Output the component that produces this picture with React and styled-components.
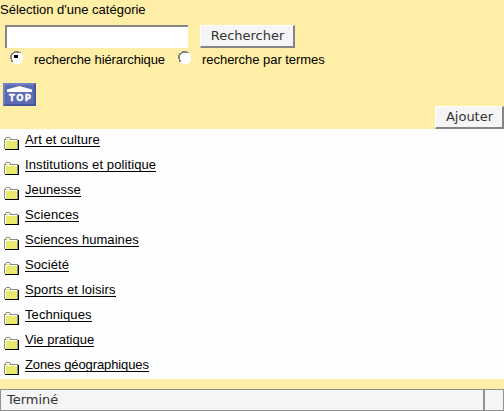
import React from "react";
import styled, { createGlobalStyle } from "styled-components";

const Global = createGlobalStyle`
  * { box-sizing: border-box; }
  body { margin: 0; overflow: hidden; background: #ffeea5; color: #000; font-family: "Liberation Sans", Arial, sans-serif; font-size: 13px; }
`;
const Page = styled.main`display: flex; flex-direction: column; width: 504px; height: 411px;`;
const Header = styled.form`height: 129px; display: flex; flex-direction: column; background: #ffeea5;`;
const Title = styled.div`height: 25px; line-height: 19px; font-size: 13px;`;
const SearchRow = styled.div`display: flex; gap: 12px; height: 23px; padding-left: 5px;`;
const Field = styled.input`
  width: 183px; height: 23px; padding: 0 3px; border: 0; border-top: 2px solid #858585; border-left: 2px solid #858585;
  background: #fff; outline: none;
`;
const Button = styled.button`
  width: ${(p) => p.$w}px; height: 23px; padding: 0 0 0 1px; background: #f5f5f5; color: #333;
  border: solid; border-width: 1px 2px 2px 1px; border-color: #fff #858585 #858585 #fff; border-radius: 0;
  font: 13px/20px "DejaVu Sans", sans-serif;
`;
const Options = styled.div`display: flex; height: 35px; padding-left: 10px;`;
const Option = styled.label`
  display: flex; width: ${(p) => p.$w}px; gap: 10px; line-height: 23px; white-space: nowrap; letter-spacing: ${(p) => p.$spacing}px;
  svg { margin-top: 3px; flex: none; }
`;
const Actions = styled.div`display: flex; justify-content: space-between; height: 46px; padding-left: 3px;`;
const AddSlot = styled.div`padding-top: 23px;`;
const List = styled.ul`margin: 0; padding: 0; height: 250px; background: #fefefe; list-style: none;`;
const Item = styled.li`display: flex; height: 25px; padding-left: 4px; gap: 6px; svg { margin-top: 8px; flex: none; }`;
const Link = styled.a`
  height: 18px; line-height: 22px; border-bottom: 1px solid #000; white-space: nowrap; color: #000;
  letter-spacing: ${(p) => p.$spacing}px;
`;
const Status = styled.footer`
  display: flex; height: 22px; margin-top: 10px; background: #f5f5f5; border: 1px solid #919191;
  font: 13px/19px "DejaVu Sans", sans-serif; color: #333;
`;
const StatusText = styled.div`width: 484px; padding-left: 6px; border-right: 2px solid #919191;`;

const Radio = ({ checked }) => (
  <svg width="14" height="14" viewBox="0 0 14 14" shapeRendering="crispEdges">
    <path d="M4 1h6v1h2v2h1v6h-1v2h-2v1H4v-1H2v-2H1V4h1V2h2z" fill="#fff" />
    <path d="M4 0h5v1h2v1H4v1H3v1H2v5h1v2H1V8H0V4h1V2h2V1h1z" fill="#858585" />
    {checked && <path d="M4 4h4v3H4z" fill="#000" />}
  </svg>
);
const TopIcon = () => (
  <svg width="33" height="23" viewBox="0 0 33 23">
    <path fill="#5c6cb4" d="M0 0h33v23H0z" />
    <path d="M0 23V0h33l-2 2H2v19z" fill="#7181c6" />
    <path d="M0 23l2-2h29V2l2-2v23z" fill="#46569c" />
    <path d="M4 6.500L16.500 3 29 6.500V9H4z" fill="#fff" />
    <text x="6" y="18" fill="#fff" stroke="#fff" strokeWidth=".3" fontFamily="DejaVu Sans, sans-serif" fontWeight="bold" fontSize="8.500" textLength="22">TOP</text>
  </svg>
);
const Folder = () => (
  <svg width="15" height="13" viewBox="0 0 15 13" shapeRendering="crispEdges">
    <defs>
      <pattern id="weave" width="2" height="2" patternUnits="userSpaceOnUse">
        <path fill="#d5d5d5" d="M0 0h2v2H0z" />
        <path fill="#ff0" d="M0 0h1v1H0zM1 1h1v1H1z" />
      </pattern>
    </defs>
    <path d="M1 12V3h14v10H1z" fill="#000" />
    <path d="M0 2h1V1h1V0h4v1h1v1h7v10H0z" fill="#8b8b8b" />
    <path d="M1 3h12v9H1zM2 1h4v2H2z" fill="url(#weave)" />
    <path d="M1 3h12v1H2v8H1zM2 1h4v1H2z" fill="#fff" />
  </svg>
);
const categories = [
  { name: "Art et culture", spacing: 0.07 },
  { name: "Institutions et politique", spacing: 0.1 },
  { name: "Jeunesse", spacing: 0 },
  { name: "Sciences", spacing: 0.15 },
  { name: "Sciences humaines", spacing: 0.06 },
  { name: "Société", spacing: 0.1 },
  { name: "Sports et loisirs", spacing: 0.1 },
  { name: "Techniques", spacing: 0.08 },
  { name: "Vie pratique", spacing: 0 },
  { name: "Zones géographiques", spacing: -0.1 },
];

export default function App() {
  return (
    <Page>
      <Global />
      <Header>
        <Title>Sélection d'une catégorie</Title>
        <SearchRow><Field /><Button type="button" $w={95}>Rechercher</Button></SearchRow>
        <Options>
          <Option $w={168} $spacing={-0.09}><Radio checked />recherche hiérarchique</Option>
          <Option $w={160} $spacing={-0.04}><Radio />recherche par termes</Option>
        </Options>
        <Actions><TopIcon /><AddSlot><Button type="button" $w={69}>Ajouter</Button></AddSlot></Actions>
      </Header>
      <List>
        {categories.map(({ name, spacing }) => (
          <Item key={name}><Folder /><Link $spacing={spacing}>{name}</Link></Item>
        ))}
      </List>
      <Status><StatusText>Terminé</StatusText></Status>
    </Page>
  );
}
